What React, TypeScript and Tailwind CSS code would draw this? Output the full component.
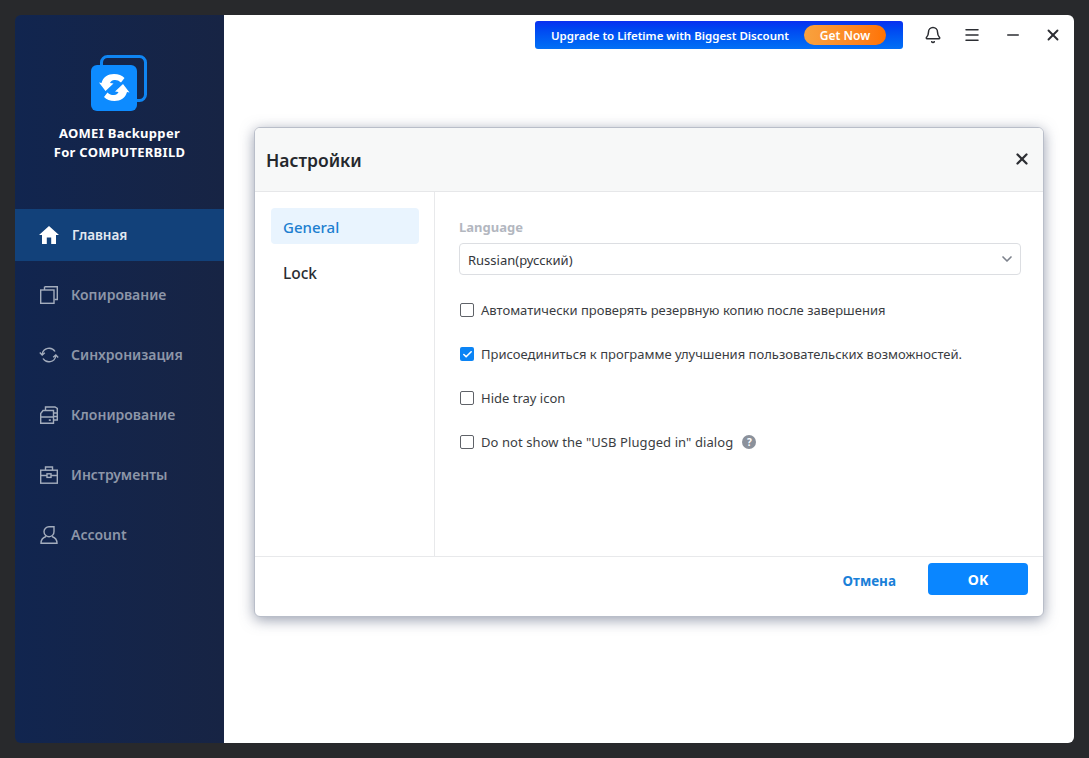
import { Bell, Check, ChevronDown, Menu, Minus, X } from 'lucide-react';

const sideItems = [
  {
    label: 'Копирование',
    icon: (
      <svg viewBox="0 0 20 20" className="w-5 h-5" fill="none" stroke="currentColor" strokeWidth="1.4">
        <rect x="1.7" y="5" width="13.3" height="13.3" />
        <path d="M5.5 1.7H18.3V14.5H15.5M5.5 1.7V5" />
      </svg>
    ),
  },
  {
    label: 'Синхронизация',
    icon: (
      <svg viewBox="0 0 20 20" className="w-5 h-5" fill="none" stroke="currentColor" strokeWidth="1.4">
        <path d="M3.2 9A7 7 0 0 1 16 6.5M16.8 11A7 7 0 0 1 4 13.5" />
        <path d="M0.8 7.5L3.2 10L5.8 7.8M14.2 12.2L16.8 10L19.2 12.5" />
      </svg>
    ),
  },
  {
    label: 'Клонирование',
    icon: (
      <svg viewBox="0 0 20 20" className="w-5 h-5" fill="none" stroke="currentColor" strokeWidth="1.4">
        <path d="M1.7 18.3V8.5L4 5.5H14.5V18.3Z" />
        <path d="M1.7 12H14.5M6.5 5.5V2H16L18.3 3.5V15H14.5M14.5 8H18.3M14.5 11.5H18.3" />
        <rect x="9.8" y="14.3" width="2" height="1.6" fill="currentColor" stroke="none" />
      </svg>
    ),
  },
  {
    label: 'Инструменты',
    icon: (
      <svg viewBox="0 0 20 20" className="w-5 h-5" fill="none" stroke="currentColor" strokeWidth="1.4">
        <rect x="1.7" y="5.2" width="16.6" height="13" />
        <path d="M6.5 5.2V2H13.5V5.2M1.7 10.5H8M12 10.5H18.3" />
        <rect x="8" y="8.8" width="4" height="3.6" />
      </svg>
    ),
  },
  {
    label: 'Account',
    icon: (
      <svg viewBox="0 0 20 20" className="w-5 h-5" fill="none" stroke="currentColor" strokeWidth="1.4">
        <path d="M10 1.7H15V6.5A5 5 0 1 1 10 1.7Z" />
        <path d="M7 11.5C4 12.5 2 15 2 18.3H18C18 15 16 12.5 13 11.5" />
      </svg>
    ),
  },
];

function Logo() {
  return (
    <svg viewBox="0 0 56 56" className="w-[56px] h-[56px] -ml-px" fill="none">
      <rect x="10.5" y="1.5" width="44" height="44" rx="6" stroke="#0f85f2" strokeWidth="3" fill="none" />
      <rect x="0" y="10" width="46" height="46" rx="6" fill="#0d8bff" />
      <path d="M10.5 28C12 22 17 19 23 19C27.5 19 31 20.5 33.5 23L30 27.5C28 25.5 25.5 24.8 23.5 25C21 25.2 19.5 26.5 19 28L22.5 28.5L14.5 36L8 27.5Z" fill="#fff" />
      <path d="M36 37C34.5 43 29.5 46 23.5 46C19 46 15.5 44.5 13 42L16.5 37.5C18.5 39.5 21 40.2 23 40C25.5 39.8 27 38.5 27.5 37L24 36.5L32 29L38.5 37.5Z" fill="#fff" />
    </svg>
  );
}

function Option({ label, checked, help }: { label: string; checked?: boolean; help?: boolean }) {
  return (
    <div className="flex items-center h-5">
      {checked ? (
        <span className="w-[14px] h-[14px] ml-px rounded-[2px] bg-[#0b84f5] flex items-center justify-center">
          <Check className="w-[11px] h-[11px] text-white" strokeWidth={3.5} />
        </span>
      ) : (
        <span className="w-[14px] h-[14px] ml-px rounded-[2px] border-[1.5px] border-[#5f6268] bg-white" />
      )}
      <span className={help ? 'ml-[7px] pt-[2px] text-[13px] text-[#3a3d42] tracking-[0.08px]' : 'ml-[7px] pt-[2px] text-[13px] text-[#3a3d42]'}>
        {label}
      </span>
      {help && (
        <span className="ml-[9px] w-[14px] h-[14px] rounded-full bg-[#8b919b] text-white text-[10px] font-bold flex items-center justify-center">
          ?
        </span>
      )}
    </div>
  );
}

export default function App() {
  return (
    <div className="w-[1089px] h-[758px] bg-[#28292c] p-[15px] font-['Noto_Sans','Open_Sans',sans-serif] overflow-hidden">
      <div className="w-[1059px] h-[728px] rounded-[6px] overflow-hidden flex">
        <aside className="w-[209px] shrink-0 bg-gradient-to-r from-[#11254f] to-[#172444] flex flex-col">
          <div className="flex flex-col items-center pt-[40px] h-[194px]">
            <Logo />
            <div className="mt-[13px] text-center text-[13px] leading-[19px] font-bold text-white tracking-[0.3px]">
              <div>AOMEI Backupper</div>
              <div>For COMPUTERBILD</div>
            </div>
          </div>
          <div className="h-[52px] bg-[#12417a] flex items-center pl-[24px] text-white">
            <svg viewBox="0 0 20 18" className="w-5 h-[18px]" fill="currentColor">
              <path d="M10 0L20 9H17V18H12.2V11.5H7.8V18H3V9H0Z" />
            </svg>
            <span className="ml-[13px] text-[13.5px] font-semibold text-[#e3e8f0]">Главная</span>
          </div>
          <nav className="flex flex-col gap-2 mt-2">
            {sideItems.map((item) => (
              <div key={item.label} className="h-[52px] flex items-center pl-[24px] text-[#8d96a8]">
                <span className="text-[#a4adbd]">{item.icon}</span>
                <span className="ml-[12px] pb-[2px] text-[14px] font-semibold">{item.label}</span>
              </div>
            ))}
          </nav>
        </aside>

        <main className="relative flex-1 bg-white">
          <header className="flex items-start justify-end h-[50px] pt-[6px]">
            <div className="w-[368px] h-[28px] rounded-[3px] bg-gradient-to-b from-[#0a2ef0] to-[#0570f5] flex items-center pl-[16px] text-white">
              <span className="pt-[2px] text-[11.5px] font-semibold whitespace-nowrap">Upgrade to Lifetime with Biggest Discount</span>
              <span className="ml-[15px] w-[82px] h-[20px] pt-[2px] rounded-full bg-gradient-to-r from-[#f8a23e] to-[#ff7300] flex items-center justify-center text-[12px] font-semibold">
                Get Now
              </span>
            </div>
            <div className="flex items-center h-[28px] ml-[21px] text-[#2c2e33] pr-[12px]">
              <Bell className="w-[18px] h-[18px]" strokeWidth={2} />
              <Menu className="w-[18px] h-[18px] ml-[21px]" strokeWidth={2} />
              <Minus className="w-[18px] h-[18px] ml-[23px]" strokeWidth={2} />
              <X className="w-[18px] h-[18px] ml-[22px]" strokeWidth={2.5} />
            </div>
          </header>

          <div className="absolute left-[30px] top-[112px] w-[790px] h-[490px] bg-white rounded-[6px] border border-[#b9bec9] shadow-[0_3px_14px_rgba(70,80,110,0.55)] flex flex-col overflow-hidden">
            <div className="h-[64px] shrink-0 bg-[#f7f8f8] border-b border-[#e6e7e9] flex items-center justify-between pl-[11px] pr-[12px]">
              <h1 className="pt-[2px] text-[17.5px] font-semibold text-[#25282d]">Настройки</h1>
              <X className="w-[18px] h-[18px] text-[#2c2e33] mb-[2px]" strokeWidth={3} />
            </div>
            <div className="flex-1 flex min-h-0">
              <div className="w-[180px] shrink-0 border-r border-[#e8e9eb] pl-[16px] pt-[16px]">
                <div className="w-[148px] h-[36px] rounded-[4px] bg-[#e9f4fe] flex items-center pl-[12px] pt-[2px] text-[15px] font-medium text-[#1d7fd0]">
                  General
                </div>
                <div className="h-[36px] mt-[11px] flex items-center pl-[12px] pt-[2px] text-[15.5px] font-medium text-[#2a2d31]">
                  Lock
                </div>
              </div>
              <div className="flex-1 pl-[24px] pr-[22px] pt-[24px]">
                <div className="text-[13px] leading-[22px] font-bold text-[#b3b7bf]">Language</div>
                <div className="mt-[5px] h-[32px] rounded-[4px] border border-[#dcdee2] flex items-center justify-between pl-[8px] pr-[5px] text-[13px] text-[#33363b]">
                  <span className="pt-[4px]">Russian(русский)</span>
                  <ChevronDown className="w-[16px] h-[16px] text-[#7d828c]" strokeWidth={2.5} />
                </div>
                <div className="mt-[25px] flex flex-col gap-[24px]">
                  <Option label="Автоматически проверять резервную копию после завершения" />
                  <Option label="Присоединиться к программе улучшения пользовательских возможностей." checked />
                  <Option label="Hide tray icon" />
                  <Option label={'Do not show the "USB Plugged in" dialog'} help />
                </div>
              </div>
            </div>
            <div className="h-[60px] shrink-0 border-t border-[#e8e9eb] flex items-start justify-end pr-[15px] pt-[6px]">
              <span className="mt-[7px] pt-px text-[13.5px] font-bold text-[#1a80d8]">Отмена</span>
              <button className="ml-[32px] w-[100px] h-[32px] rounded-[4px] bg-[#0a86ff] text-white text-[14px] font-bold">
                OK
              </button>
            </div>
          </div>
        </main>
      </div>
    </div>
  );
}
